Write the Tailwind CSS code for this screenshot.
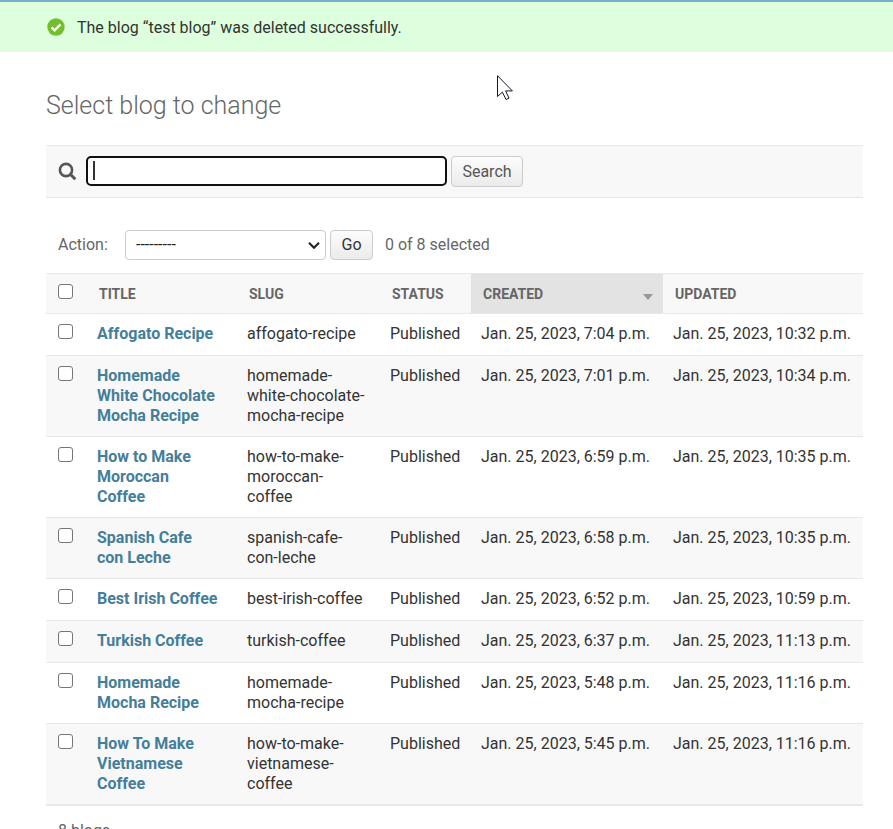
<!DOCTYPE html>
<html lang="en">
<head>
<meta charset="utf-8">
<meta name="viewport" content="width=device-width, initial-scale=1">
<title>Select blog to change</title>
<script src="https://cdn.jsdelivr.net/npm/@tailwindcss/browser@4"></script>
</head>
<body class="bg-white font-[Roboto,sans-serif] text-base leading-5 text-[#333]">
<div class="flex items-start gap-3 border-t-2 border-[#79aec8] bg-[#ddffdd] pt-4 pb-3.5 pl-[47px]" role="status">
  <svg class="size-[18px]" viewBox="0 0 18 18" aria-hidden="true"><circle cx="9" cy="9" r="8.7" fill="#70bf2b"/><path d="M4.6 9.3l3 3 5.9-5.9" fill="none" stroke="#fff" stroke-width="2.4"/></svg>
  <p>The blog “test blog” was deleted successfully.</p>
</div>

<main class="pt-10 pr-[30px] pl-[46px]">
  <h1 class="mb-[26px] text-[25px] leading-[27px] font-light text-[#666]">Select blog to change</h1>

  <form class="flex h-[53px] items-start border-y border-[#e8e8e8] bg-[#f8f8f8] pt-2.5 pl-3" role="search">
    <label for="searchbar" class="mt-1.5 mr-[9px]" aria-label="Search blogs">
      <svg class="size-[19px]" viewBox="0 0 19 19" fill="none" stroke="#555" aria-hidden="true"><circle cx="8" cy="8" r="6.1" stroke-width="2.6"/><path d="M12.3 12.3l5 4.9" stroke-width="3"/></svg>
    </label>
    <div class="relative">
      <input id="searchbar" type="text" class="block h-[30px] w-[361px] rounded-[5px] border-2 border-[#101010] bg-white px-1.5 text-[#333] outline-none">
      <span class="absolute top-[5px] left-[7px] h-[19px] w-0.5 bg-[#333]"></span>
    </div>
    <button type="submit" class="ml-1 h-[31px] w-[72px] rounded border border-[#ccc] bg-linear-to-b from-[#fcfcfc] to-[#ebebeb] text-[#555]">Search</button>
  </form>

  <form>
    <div class="mt-8 mb-[13px] flex h-[30px] items-center pl-3 text-[#666]">
      <label for="action" class="w-[67px]">Action:</label>
      <div class="relative">
        <select id="action" class="block h-[30px] w-[201px] appearance-none rounded border border-[#ccc] bg-white pl-2.5 text-[#222]"><option>---------</option></select>
        <svg class="pointer-events-none absolute top-[11px] right-1.5 h-[9px] w-3" viewBox="0 0 12 9" fill="none" stroke="#222" stroke-width="2.1" aria-hidden="true"><path d="M1 1.8l5 5 5-5"/></svg>
      </div>
      <button type="button" class="mr-3 ml-1 h-[30px] w-[43px] rounded border border-[#ccc] bg-linear-to-b from-[#fcfcfc] to-[#ebebeb] text-[#333]">Go</button>
      <span>0 of 8 selected</span>
    </div>

    <table class="w-full table-fixed border-separate border-spacing-0 border-b-2 border-[#e8e8e8] text-left [&_td]:border-t [&_td]:border-[#e8e8e8] [&_td]:px-2.5 [&_td]:py-2.5 [&_td]:align-top [&_th]:border-t [&_th]:border-[#e8e8e8] [&_th]:align-top [&_input]:block [&_input]:size-[15px] [&_input]:appearance-none [&_input]:rounded-[3px] [&_input]:border [&_input]:border-[#767676] [&_input]:bg-white [&_input:checked]:bg-[#447e9b] [&_a]:font-bold [&_a]:text-[#447e9b]">
      <colgroup><col class="w-[41px]"><col><col class="w-[143px]"><col class="w-[91px]"><col class="w-[192px]"><col class="w-[200px]"></colgroup>
      <thead class="bg-[#f8f8f8] text-[14px] leading-4 font-bold text-[#666] uppercase">
        <tr class="h-10">
          <th class="pt-2.5 pl-3"><input type="checkbox" aria-label="Select all blogs"></th>
          <th class="pt-3 pl-3">Title</th>
          <th class="pt-3 pl-3">Slug</th>
          <th class="pt-3 pl-3">Status</th>
          <th class="bg-[#e3e3e3] pt-3 pr-2.5 pl-3" aria-sort="descending">
            <div class="flex items-start justify-between"><span>Created</span><svg class="mt-2 h-1.5 w-2.5" viewBox="0 0 10 6" aria-hidden="true"><path d="M0 0h10L5 6z" fill="#999"/></svg></div>
          </th>
          <th class="pt-3 pl-3">Updated</th>
        </tr>
      </thead>
      <tbody class="[&>tr]:h-[42px] [&>tr:nth-child(even)]:bg-[#f8f8f8] [&_td:first-child]:pl-3 [&_td:nth-child(2)]:pr-4.5 [&_td:nth-child(3)]:pr-3.5">
        <tr><td><input type="checkbox" aria-label="Select Affogato Recipe"></td><td><a href="#">Affogato Recipe</a></td><td>affogato-recipe</td><td>Published</td><td>Jan. 25, 2023, 7:04 p.m.</td><td>Jan. 25, 2023, 10:32 p.m.</td></tr>
        <tr><td><input type="checkbox" aria-label="Select Homemade White Chocolate Mocha Recipe"></td><td><a href="#">Homemade White Chocolate Mocha Recipe</a></td><td>homemade-white-chocolate-mocha-recipe</td><td>Published</td><td>Jan. 25, 2023, 7:01 p.m.</td><td>Jan. 25, 2023, 10:34 p.m.</td></tr>
        <tr><td><input type="checkbox" aria-label="Select How to Make Moroccan Coffee"></td><td><a href="#">How to Make Moroccan Coffee</a></td><td>how-to-make-moroccan-coffee</td><td>Published</td><td>Jan. 25, 2023, 6:59 p.m.</td><td>Jan. 25, 2023, 10:35 p.m.</td></tr>
        <tr><td><input type="checkbox" aria-label="Select Spanish Cafe con Leche"></td><td><a href="#">Spanish Cafe con Leche</a></td><td>spanish-cafe-con-leche</td><td>Published</td><td>Jan. 25, 2023, 6:58 p.m.</td><td>Jan. 25, 2023, 10:35 p.m.</td></tr>
        <tr><td><input type="checkbox" aria-label="Select Best Irish Coffee"></td><td><a href="#">Best Irish Coffee</a></td><td>best-irish-coffee</td><td>Published</td><td>Jan. 25, 2023, 6:52 p.m.</td><td>Jan. 25, 2023, 10:59 p.m.</td></tr>
        <tr><td><input type="checkbox" aria-label="Select Turkish Coffee"></td><td><a href="#">Turkish Coffee</a></td><td>turkish-coffee</td><td>Published</td><td>Jan. 25, 2023, 6:37 p.m.</td><td>Jan. 25, 2023, 11:13 p.m.</td></tr>
        <tr><td><input type="checkbox" aria-label="Select Homemade Mocha Recipe"></td><td><a href="#">Homemade Mocha Recipe</a></td><td>homemade-mocha-recipe</td><td>Published</td><td>Jan. 25, 2023, 5:48 p.m.</td><td>Jan. 25, 2023, 11:16 p.m.</td></tr>
        <tr><td><input type="checkbox" aria-label="Select How To Make Vietnamese Coffee"></td><td><a href="#">How To Make Vietnamese Coffee</a></td><td>how-to-make-vietnamese-coffee</td><td>Published</td><td>Jan. 25, 2023, 5:45 p.m.</td><td>Jan. 25, 2023, 11:16 p.m.</td></tr>
      </tbody>
    </table>
    <p class="px-3 py-[15px] text-[#666]">8 blogs</p>
  </form>
</main>

<svg class="pointer-events-none absolute top-[75px] left-[497px] h-[26px] w-[17px]" viewBox="0 0 17 26" aria-hidden="true"><path d="M.5.7v20.8l4.9-4.4 3.6 7.4 3-1.4-3.4-7.2h6.8z" fill="#fff" stroke="#111827"/></svg>
</body>
</html>
